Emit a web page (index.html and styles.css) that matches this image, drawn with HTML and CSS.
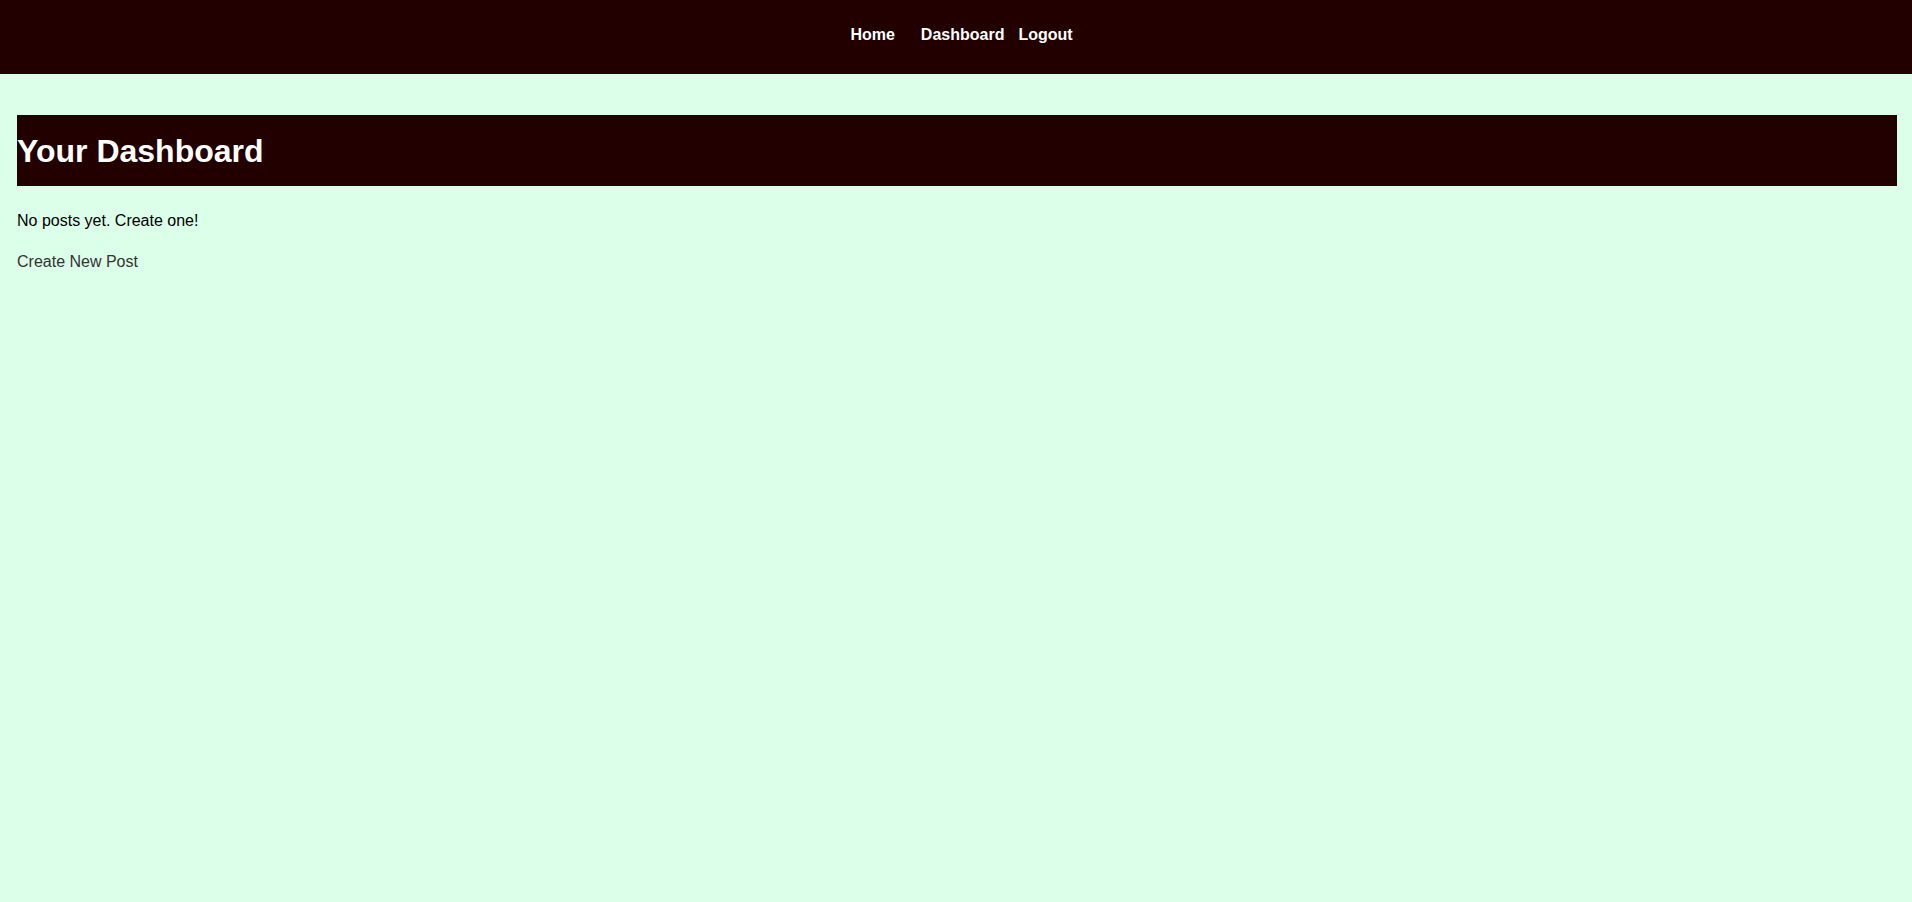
FILE: index.html
```html
<!DOCTYPE html>
<html lang="en">
<head>
<meta charset="utf-8">
<title>Dashboard</title>
<link rel="stylesheet" href="styles.css">
</head>
<body>
<header class="site-header">
  <nav class="nav">
    <a class="nav-link nav-home" href="#">Home</a>
    <a class="nav-link nav-dash" href="#">Dashboard</a>
    <a class="nav-link" href="#">Logout</a>
  </nav>
</header>
<main class="content">
  <h1 class="page-title">Your Dashboard</h1>
  <p class="empty">No posts yet. Create one!</p>
  <a class="create-link" href="#">Create New Post</a>
</main>
</body>
</html>
```
FILE: styles.css
```css
html, body {
  margin: 0;
  padding: 0;
}
body {
  background: #dcffe9;
  font-family: "Liberation Sans", Arial, sans-serif;
  font-size: 16px;
  line-height: 18px;
  color: #000;
  min-height: 902px;
}
.site-header {
  background: #220000;
  height: 74px;
  box-sizing: border-box;
  padding-top: 26px;
}
.nav {
  display: flex;
  justify-content: center;
  padding-left: 11px;
}
.nav-link {
  color: #fff;
  font-weight: bold;
  text-decoration: none;
  line-height: 18px;
}
.nav-home {
  margin-right: 26px;
}
.nav-dash {
  margin-right: 14px;
}
.content {
  padding: 41px 15px 0 17px;
}
.page-title {
  background: #220000;
  color: #fff;
  font-size: 32px;
  line-height: 37px;
  font-weight: bold;
  margin: 0;
  padding: 18px 0 16px;
}
.empty {
  margin: 26px 0 0;
}
.create-link {
  display: block;
  margin-top: 23px;
  color: #333;
  text-decoration: none;
  width: max-content;
}
```
